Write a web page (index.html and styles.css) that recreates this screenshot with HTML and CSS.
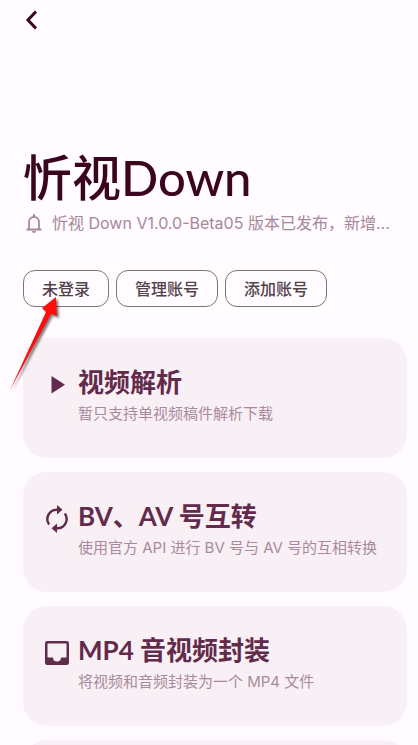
FILE: index.html
```html
<!DOCTYPE html>
<html lang="zh-CN">
<head>
  <meta charset="UTF-8">
  <meta name="viewport" content="width=device-width, initial-scale=1">
  <title>忻视Down</title>
  <link rel="stylesheet" href="styles.css">
</head>
<body>
  <!-- Top bar with back button -->
  <header class="topbar">
    <button class="back" type="button" aria-label="返回">
      <svg width="16" height="24" viewBox="0 0 16 24"><path d="M12 3.500 L4 12 L12 20.500" fill="none" stroke="currentColor" stroke-width="3"/></svg>
    </button>
  </header>

  <main class="page">
    <h1 class="title">忻视Down</h1>
    <div class="notice">
      <svg class="bell" width="22" height="22" viewBox="0 0 22 22">
        <path d="M3.500 17.500h15M6 17.500V10a5 5 0 0 1 10 0v7.500" fill="none" stroke="currentColor" stroke-width="1.800"/>
        <path d="M9.800 5V3.200a1.200 1.200 0 0 1 2.400 0V5zM9 19h4a2 2 0 0 1-4 0z" fill="currentColor"/>
      </svg>
      <p>忻视 Down V1.0.0-Beta05 版本已发布，新增...</p>
    </div>

    <!-- Account buttons -->
    <div class="actions">
      <button class="chip" type="button">未登录</button>
      <button class="chip" type="button">管理账号</button>
      <button class="chip" type="button">添加账号</button>
      <svg class="pointer" width="56" height="104" viewBox="0 0 56 104" aria-hidden="true">
        <path d="M2 96 L38 18 L34 14 L48 3 L49 22 L43 20 L22 59 Z" fill="#ff0d0d"/>
      </svg>
    </div>

    <!-- Tool list -->
    <div class="tools">
      <a class="card" href="#parse">
        <svg class="icon" width="28" height="28" viewBox="0 0 28 28"><path d="M8.500 5v17.500L22 13.750z" fill="currentColor"/></svg>
        <div class="text">
          <h2>视频解析</h2>
          <p>暂只支持单视频稿件解析下载</p>
        </div>
      </a>
      <a class="card" href="#convert">
        <svg class="icon" width="28" height="28" viewBox="0 0 28 28">
          <path d="M6.200 19.500A9.300 9.300 0 0 1 14 4.700h1M21.800 8.500A9.300 9.300 0 0 1 14 23.300h-1" fill="none" stroke="currentColor" stroke-width="2.400"/>
          <path d="M14 0l5.500 4.700L14 9.400zM14 18.600l-5.500 4.700L14 28z" fill="currentColor"/>
        </svg>
        <div class="text">
          <h2>BV、AV 号互转</h2>
          <p>使用官方 API 进行 BV 号与 AV 号的互相转换</p>
        </div>
      </a>
      <a class="card" href="#mux">
        <svg class="icon" width="28" height="28" viewBox="0 0 28 28"><path fill-rule="evenodd" d="M4.500 2h19A2.500 2.500 0 0 1 26 4.500v19a2.500 2.500 0 0 1-2.500 2.500h-19A2.500 2.500 0 0 1 2 23.500v-19A2.500 2.500 0 0 1 4.500 2zM4.500 4.500V18.500H10a4 4 0 0 0 8 0h5.500V4.500z" fill="currentColor"/></svg>
        <div class="text">
          <h2>MP4 音视频封装</h2>
          <p>将视频和音频封装为一个 MP4 文件</p>
        </div>
      </a>
      <div class="card"></div>
    </div>
  </main>
</body>
</html>
```
FILE: styles.css
```css
* {
  box-sizing: border-box;
}
body {
  margin: 0;
  height: 100vh;
  overflow: hidden;
  background: #fffbff;
  color: #3b0520;
  font-family: Lato, "Noto Sans CJK SC", sans-serif;
}
h1, h2, p {
  margin: 0;
}
button {
  font-family: inherit;
  background: none;
  cursor: pointer;
}

/* Top bar */
.topbar {
  padding: 8px 24px;
}
.back {
  display: block;
  padding: 0;
  border: 0;
  color: #3b0520;
}
.back svg {
  display: block;
}

.page {
  padding: 105px 11px 0 23px;
}
.title {
  font-size: 49px;
  line-height: 64px;
  font-weight: 500;
}
.notice {
  display: flex;
  align-items: center;
  gap: 7px;
  margin-top: 2px;
  color: #a5889a;
  font-family: Inter, "Noto Sans CJK SC", sans-serif;
  font-size: 16px;
  line-height: 24px;
  white-space: nowrap;
}
.bell {
  flex: none;
}

/* Account buttons */
.actions {
  position: relative;
  display: flex;
  gap: 7px;
  margin-top: 35px;
}
.chip {
  height: 37px;
  padding: 0 18px;
  border: 1px solid #837378;
  border-radius: 12px;
  color: #51434a;
  font-size: 16px;
  line-height: 24px;
  font-weight: 500;
}
/* Red arrow that points at the login button */
.pointer {
  position: absolute;
  left: -15px;
  top: 24px;
  z-index: 1;
  pointer-events: none;
  filter: drop-shadow(2px 2px 1px rgba(0, 0, 0, 0.5));
}

/* Tool cards */
.tools {
  display: grid;
  gap: 14px;
  margin-top: 31px;
}
.card {
  display: flex;
  align-items: flex-start;
  gap: 7px;
  min-height: 120px;
  padding: 26px 12px 26px 20px;
  border-radius: 24px;
  background: #f9f0f5;
  color: #622b4b;
  text-decoration: none;
}
.icon {
  flex: none;
  margin-top: 7px;
}
.text {
  white-space: nowrap;
}
.text h2 {
  font-size: 26px;
  line-height: 36px;
  font-weight: 700;
}
.text p {
  margin-top: 2px;
  color: #a88a9c;
  font-family: Inter, "Noto Sans CJK SC", sans-serif;
  font-size: 15px;
  line-height: 24px;
}
```
